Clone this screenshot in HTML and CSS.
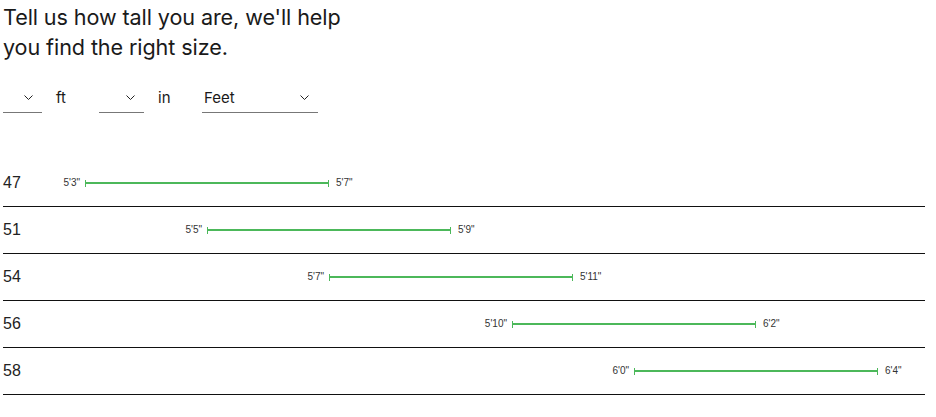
FILE: index.html
```
<!DOCTYPE html>
<html lang="en">
<head>
    <meta charset="UTF-8">
    <title>Size guide</title>
    <link rel="stylesheet" href="styles.css">
</head>
<body>
    <div class="size-finder">
        <h2 class="intro">Tell us how tall you are, we'll help<br>you find the right size.</h2>

        <div class="height-form">
            <div class="pick pick-ft">
                <span class="pick-value"></span>
                <svg class="chev" width="9" height="5" viewBox="0 0 9 5"><path d="M0.5 0.5 L4.5 4.5 L8.5 0.5" fill="none" stroke="#222" stroke-width="1"/></svg>
            </div>
            <span class="unit">ft</span>

            <div class="pick pick-in">
                <span class="pick-value"></span>
                <svg class="chev" width="9" height="5" viewBox="0 0 9 5"><path d="M0.5 0.5 L4.5 4.5 L8.5 0.5" fill="none" stroke="#222" stroke-width="1"/></svg>
            </div>
            <span class="unit unit-in">in</span>

            <div class="pick pick-units">
                <span class="pick-value">Feet</span>
                <svg class="chev" width="9" height="5" viewBox="0 0 9 5"><path d="M0.5 0.5 L4.5 4.5 L8.5 0.5" fill="none" stroke="#222" stroke-width="1"/></svg>
            </div>
        </div>

        <div class="size-chart">
            <div class="size-row">
                <span class="size-name">47</span>
                <div class="range" style="margin-left: 82px;">
                    <span class="range-lo">5'3"</span>
                    <span class="range-hi">5'7"</span>
                </div>
            </div>
            <div class="size-row">
                <span class="size-name">51</span>
                <div class="range" style="margin-left: 204px;">
                    <span class="range-lo">5'5"</span>
                    <span class="range-hi">5'9"</span>
                </div>
            </div>
            <div class="size-row">
                <span class="size-name">54</span>
                <div class="range" style="margin-left: 326px;">
                    <span class="range-lo">5'7"</span>
                    <span class="range-hi">5'11"</span>
                </div>
            </div>
            <div class="size-row">
                <span class="size-name">56</span>
                <div class="range" style="margin-left: 509px;">
                    <span class="range-lo">5'10"</span>
                    <span class="range-hi">6'2"</span>
                </div>
            </div>
            <div class="size-row">
                <span class="size-name">58</span>
                <div class="range" style="margin-left: 631px;">
                    <span class="range-lo">6'0"</span>
                    <span class="range-hi">6'4"</span>
                </div>
            </div>
        </div>
    </div>
</body>
</html>
```
FILE: styles.css
```
body {
    margin: 0;
    background: #fff;
    color: #1a1a1a;
    font-family: Inter, "Liberation Sans", sans-serif;
}
.size-finder {
    width: 922px;
    padding-left: 3px;
}
.intro {
    margin: 0;
    padding-top: 2px;
    font-size: 21.6px;
    font-weight: 400;
    line-height: 30px;
    letter-spacing: -0.1px;
}
.height-form {
    display: flex;
    align-items: center;
    margin-top: 20px;
    height: 31px;
}
.pick {
    display: flex;
    align-items: center;
    justify-content: space-between;
    height: 30px;
    border-bottom: 1px solid #777;
    font-size: 15px;
}
.pick-value {
    padding-left: 2px;
}
.chev {
    display: block;
}
.pick-ft {
    width: 39px;
    padding-right: 9px;
    box-sizing: border-box;
}
.pick-in {
    width: 45px;
    padding-right: 9px;
    box-sizing: border-box;
}
.pick-units {
    width: 116px;
    padding-right: 9px;
    box-sizing: border-box;
}
.unit {
    font-size: 15px;
    padding-left: 14px;
    width: 57px;
    box-sizing: border-box;
}
.unit-in {
    width: 58px;
}
.size-chart {
    margin-top: 47px;
}
.size-row {
    display: flex;
    align-items: center;
    height: 46px;
    border-bottom: 1px solid #111;
    position: relative;
}
.size-name {
    position: absolute;
    left: 0;
    font-family: "Liberation Sans", Arial, sans-serif;
    font-size: 16px;
    color: #222;
}
.range {
    position: relative;
    width: 244px;
    height: 7px;
    border-left: 1px solid #4cb85a;
    border-right: 1px solid #4cb85a;
    box-sizing: border-box;
}
.range::before {
    content: "";
    position: absolute;
    left: 0;
    right: 0;
    top: 2px;
    height: 2px;
    background: #4cb85a;
}
.range-lo, .range-hi {
    position: absolute;
    top: -3px;
    font-family: "Liberation Sans", Arial, sans-serif;
    font-size: 10px;
    line-height: 12px;
    color: #333;
    white-space: nowrap;
}
.range-lo {
    right: 100%;
    margin-right: 6px;
}
.range-hi {
    left: 100%;
    margin-left: 8px;
}
```
